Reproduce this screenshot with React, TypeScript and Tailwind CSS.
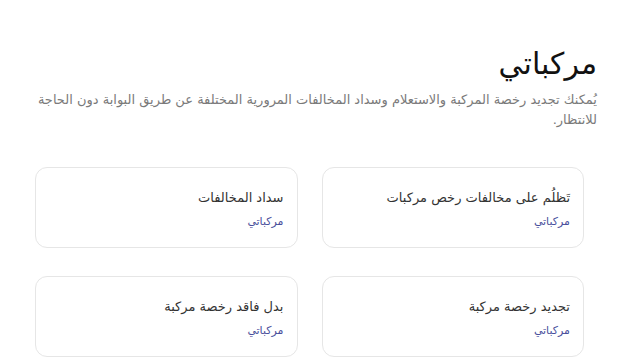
import React from 'react';

type Service = {
  title: string;
  category: string;
};

const services: Service[] = [
  { title: 'تَظلُم على مخالفات رخص مركبات', category: 'مركباتي' },
  { title: 'سداد المخالفات', category: 'مركباتي' },
  { title: 'تجديد رخصة مركبة', category: 'مركباتي' },
  { title: 'بدل فاقد رخصة مركبة', category: 'مركباتي' },
];

function ServiceCard({ service }: { service: Service }) {
  return (
    <div className="h-[81px] rounded-xl border border-[#e6e6e6] bg-white px-[13px] pt-[20px]">
      <h3 className="text-[13px] leading-[20px] text-[#333333]">{service.title}</h3>
      <p className="mt-[5px] text-[11px] leading-[18px] text-[#4a4f9c]">{service.category}</p>
    </div>
  );
}

export default function App() {
  return (
    <div
      dir="rtl"
      className="min-h-screen bg-white pt-[44px] pl-[33px] pr-[43px]"
      style={{ fontFamily: '"DejaVu Sans", "Noto Sans", sans-serif' }}
    >
      <h1 className="text-[30px] leading-[40px] text-[#111111]">مركباتي</h1>
      <p className="mt-[6px] text-[13px] leading-[20px] text-[#7a7a7a]">
        يُمكنك تجديد رخصة المركبة والاستعلام وسداد المخالفات المرورية المختلفة عن طريق البوابة دون الحاجة للانتظار.
      </p>
      <div className="mt-[37px] mr-[13px] ml-[2px] grid grid-cols-2 gap-x-[24px] gap-y-[28px]">
        {services.map((s) => (
          <ServiceCard key={s.title} service={s} />
        ))}
      </div>
    </div>
  );
}
